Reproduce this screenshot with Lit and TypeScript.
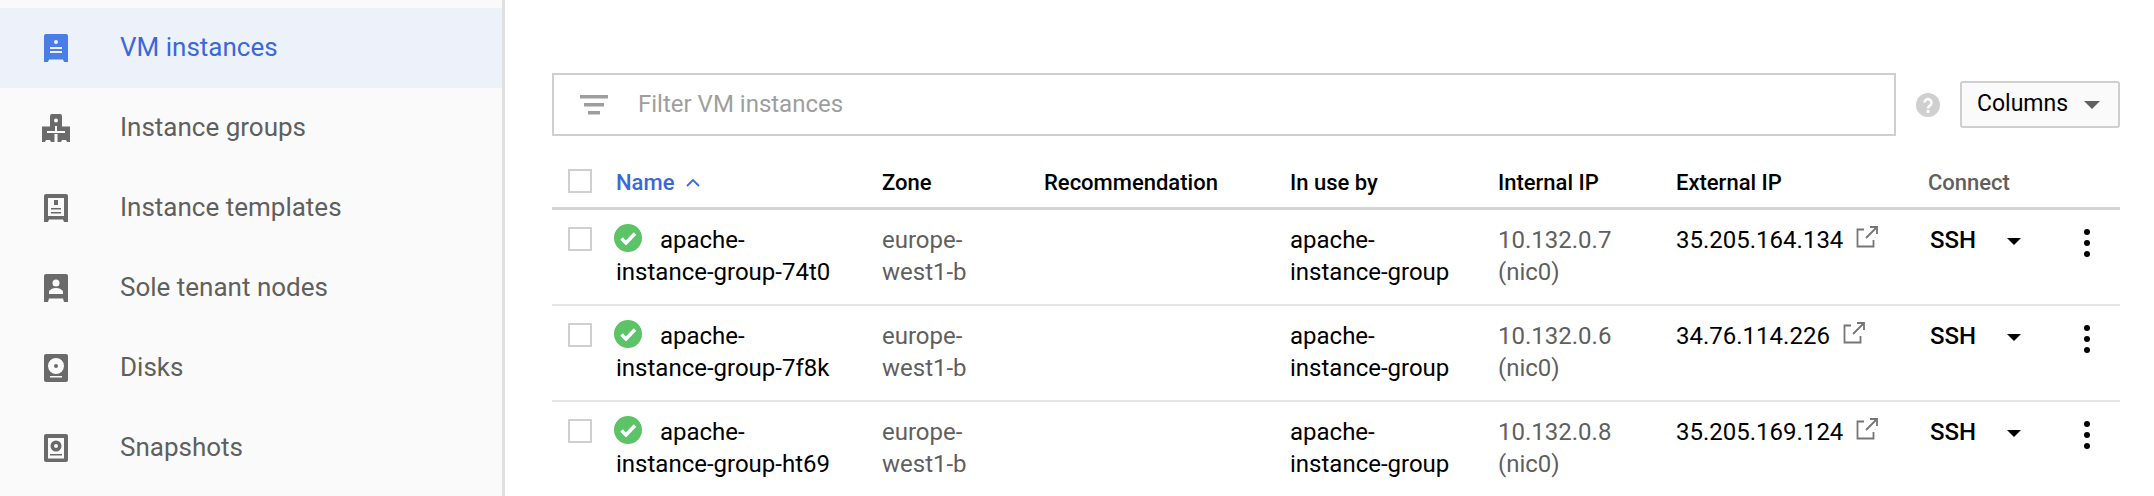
import { LitElement, css, html, svg } from "lit";
import { customElement } from "lit/decorators.js";

const navIcons = {
  vm: svg`<path fill-rule="evenodd" d="M2 0h20a2 2 0 0 1 2 2v26h-4l-1-2.500H5L4 28H0V2a2 2 0 0 1 2-2zM12 6a2 2 0 1 0 0 4 2 2 0 0 0 0-4zM6 13v2h12v-2zM6 17v2h12v-2z"/>`,
  groups: svg`<path fill-rule="evenodd" d="M10 0h8a2 2 0 0 1 2 2v10.500h8V28h-3l-1-2h-4l-1 2h-3.500v-8h-3v8H9l-1-2H4l-1 2H0V12.500h8V2a2 2 0 0 1 2-2zM14 4.500a2 2 0 1 0 0 4 2 2 0 0 0 0-4zM13 12v5H5v2h18v-2h-8v-5z"/>`,
  template: svg`<path fill-rule="evenodd" d="M2 0h20a2 2 0 0 1 2 2v26h-4l-1-2.500H5L4 28H0V2a2 2 0 0 1 2-2zM4 4v18h16V4zM10 6h4v5h-4zM7 14h10v1.500H7zM7 18h10v1.500H7z"/>`,
  tenant: svg`<path fill-rule="evenodd" d="M2 0h20a2 2 0 0 1 2 2v26h-4l-1-3.500H5L4 28H0V2a2 2 0 0 1 2-2zM12 5.500a3.500 3.500 0 1 0 0 7 3.500 3.500 0 0 0 0-7zM5 20h14v-2c0-2.500-4.500-4-7-4s-7 1.500-7 4z"/>`,
  disk: svg`<path fill-rule="evenodd" d="M2 0h20a2 2 0 0 1 2 2v24a2 2 0 0 1-2 2H2a2 2 0 0 1-2-2V2a2 2 0 0 1 2-2zM12 4a8 8 0 1 0 0 16 8 8 0 0 0 0-16zM12 10a2 2 0 1 1 0 4 2 2 0 0 1 0-4zM6 22v1.500h12V22z"/>`,
  snapshot: svg`<path fill-rule="evenodd" d="M2 0h20a2 2 0 0 1 2 2v24a2 2 0 0 1-2 2H2a2 2 0 0 1-2-2V2a2 2 0 0 1 2-2zM4 4v20.500h16V4zM12 6.500a5.500 5.500 0 1 1 0 11 5.500 5.500 0 0 1 0-11zM12 10a2 2 0 1 0 0 4 2 2 0 0 0 0-4zM6 20h12v1.500H6z"/>`,
};

const navItems = [
  { label: "VM instances", icon: navIcons.vm, active: true },
  { label: "Instance groups", icon: navIcons.groups, wide: true },
  { label: "Instance templates", icon: navIcons.template },
  { label: "Sole tenant nodes", icon: navIcons.tenant },
  { label: "Disks", icon: navIcons.disk },
  { label: "Snapshots", icon: navIcons.snapshot },
];

const rows = [
  { name: "74t0", internal: "10.132.0.7", external: "35.205.164.134" },
  { name: "7f8k", internal: "10.132.0.6", external: "34.76.114.226" },
  { name: "ht69", internal: "10.132.0.8", external: "35.205.169.124" },
];

@customElement("app-root")
export class AppRoot extends LitElement {
  private renderNav() {
    return navItems.map(
      (item) => html`
        <div class="nav-item ${item.active ? "active" : ""}">
          <span class="nav-icon">
            <svg
              width=${item.wide ? 28 : 24}
              height="28"
              viewBox="0 0 ${item.wide ? 28 : 24} 28"
              fill="currentColor"
            >
              ${item.icon}
            </svg>
          </span>
          <span class="nav-label">${item.label}</span>
        </div>
      `
    );
  }

  private renderRow(row: { name: string; internal: string; external: string }) {
    return html`
      <div class="row">
        <div><span class="checkbox"></span></div>
        <div class="name">
          <svg class="status" width="28" height="28" viewBox="0 0 28 28">
            <circle cx="14" cy="14" r="14" fill="#5cc466" />
            <path d="M7.500 14.500l4.500 4.500 9-9.500" fill="none" stroke="#fff" stroke-width="3.600" />
          </svg>
          <span class="name-first">apache-</span><br />instance-group-${row.name}
        </div>
        <div class="muted">europe-<br />west1-b</div>
        <div></div>
        <div>apache-<br />instance-group</div>
        <div class="muted">${row.internal}<br />(nic0)</div>
        <div class="ext-cell">
          ${row.external}
          <svg class="external" width="22" height="22" viewBox="0 0 22 22" fill="none" stroke="#757575" stroke-width="1.800">
            <path d="M8 3.500H1.500v17h16V14M10 12L20.500 1.500M14 1h7v7" />
          </svg>
        </div>
        <div class="connect">
          <span>SSH</span>
          <svg width="14" height="7" viewBox="0 0 14 7"><path d="M0 0h14L7 7z" /></svg>
        </div>
        <div class="more">
          <i></i><i></i><i></i>
        </div>
      </div>
    `;
  }

  render() {
    return html`
      <aside class="sidebar">${this.renderNav()}</aside>
      <main class="main">
        <div class="toolbar">
          <div class="filter">
            <svg width="28" height="20" viewBox="0 0 28 20" fill="#9e9e9e">
              <path d="M0 0h28v3.500H0zM4 8h20v3.500H4zM8 16h12v3.500H8z" />
            </svg>
            <span class="lift">Filter VM instances</span>
          </div>
          <svg class="help" width="24" height="24" viewBox="0 0 24 24">
            <circle cx="12" cy="12" r="12" fill="#cfcfcf" />
            <path d="M8.500 9.500a3.500 3.500 0 1 1 5.500 3c-1.300 1-2 1.500-2 3" fill="none" stroke="#fff" stroke-width="2.600" />
            <rect x="10.600" y="17" width="2.800" height="2.800" fill="#fff" />
          </svg>
          <div class="columns">
            <span class="lift">Columns</span>
            <svg width="16" height="8" viewBox="0 0 16 8" fill="#616161"><path d="M0 0h16L8 8z" /></svg>
          </div>
        </div>
        <div class="row head">
          <div><span class="checkbox"></span></div>
          <div class="sorted">
            Name
            <svg width="14" height="9" viewBox="0 0 14 9" fill="none" stroke="#3b68d8" stroke-width="1.800">
              <path d="M1 8l6-6 6 6" />
            </svg>
          </div>
          <div>Zone</div>
          <div>Recommendation</div>
          <div>In use by</div>
          <div>Internal IP</div>
          <div class="ext-cell">External IP</div>
          <div class="muted head-connect">Connect</div>
          <div></div>
        </div>
        ${rows.map((row) => this.renderRow(row))}
      </main>
    `;
  }

  static styles = css`
    :host {
      display: flex;
      height: 496px;
      overflow: hidden;
      background: #fff;
      font-family: Roboto, "Liberation Sans", sans-serif;
      color: #000;
    }

    .sidebar {
      box-sizing: border-box;
      flex: none;
      width: 505px;
      padding-top: 8px;
      background: #fafafa;
      border-right: 3px solid #e0e0e0;
    }
    .nav-item {
      display: flex;
      align-items: center;
      height: 80px;
      font-size: 26px;
      color: #5f5f5f;
    }
    .nav-item svg {
      color: #6a6a6a;
    }
    .nav-item.active {
      background: #ecf1fa;
      color: #3b68d8;
    }
    .nav-icon {
      display: flex;
      justify-content: center;
      flex: none;
      width: 28px;
      margin-left: 42px;
      margin-right: 50px;
    }
    .nav-item.active svg {
      color: #4a7de6;
    }
    .nav-label,
    .lift {
      padding-bottom: 2px;
    }

    .main {
      flex: none;
      width: 1568px;
      margin-left: 47px;
    }

    .toolbar {
      display: flex;
      align-items: center;
      height: 63px;
      margin-top: 73px;
    }
    .filter {
      box-sizing: border-box;
      display: flex;
      align-items: center;
      gap: 30px;
      width: 1344px;
      height: 63px;
      padding-left: 26px;
      border: 2px solid #cfcfcf;
      font-size: 24px;
      color: #9e9e9e;
    }
    .help {
      margin-left: 20px;
    }
    .columns {
      box-sizing: border-box;
      display: flex;
      align-items: center;
      justify-content: space-between;
      width: 160px;
      height: 47px;
      margin-left: 20px;
      padding: 0 18px 0 15px;
      border: 2px solid #cfcfcf;
      border-radius: 3px;
      background: #fafafa;
      font-size: 23px;
    }

    .row {
      display: grid;
      grid-template-columns: 65px 265px 162px 246px 208px 179px 253px 135px 55px;
      box-sizing: border-box;
      height: 96px;
      padding-top: 14px;
      border-bottom: 2px solid #e6e6e6;
      font-size: 24px;
      line-height: 32px;
    }
    .row.head {
      align-items: center;
      height: 74px;
      padding-top: 22px;
      border-bottom: 3px solid #d4d4d4;
      font-size: 22px;
      font-weight: 500;
    }
    .muted {
      color: #5f5f5f;
    }
    .head-connect {
      margin-left: -2px;
    }
    .ext-cell {
      margin-left: -1px;
    }
    .checkbox {
      display: block;
      box-sizing: border-box;
      width: 24px;
      height: 24px;
      margin: 3px 0 0 16px;
      border: 2px solid #cfcfcf;
    }
    .head .checkbox {
      margin: 0 0 4px 16px;
    }
    .name {
      margin-left: -1px;
    }
    .sorted {
      display: flex;
      align-items: center;
      gap: 12px;
      margin-left: -1px;
      color: #3b68d8;
    }
    .status {
      vertical-align: top;
      margin-left: -2px;
    }
    .name-first {
      margin-left: 12px;
    }
    .external {
      vertical-align: top;
      margin-left: 7px;
      margin-top: 2px;
    }
    .connect {
      display: flex;
      align-items: flex-start;
      gap: 31px;
      font-weight: 500;
    }
    .connect svg {
      margin-top: 14px;
    }
    .more {
      display: flex;
      flex-direction: column;
      align-items: center;
      gap: 5px;
      width: 44px;
      padding-top: 5px;
    }
    .more i {
      width: 6px;
      height: 6px;
      border-radius: 50%;
      background: #000;
    }
  `;
}
